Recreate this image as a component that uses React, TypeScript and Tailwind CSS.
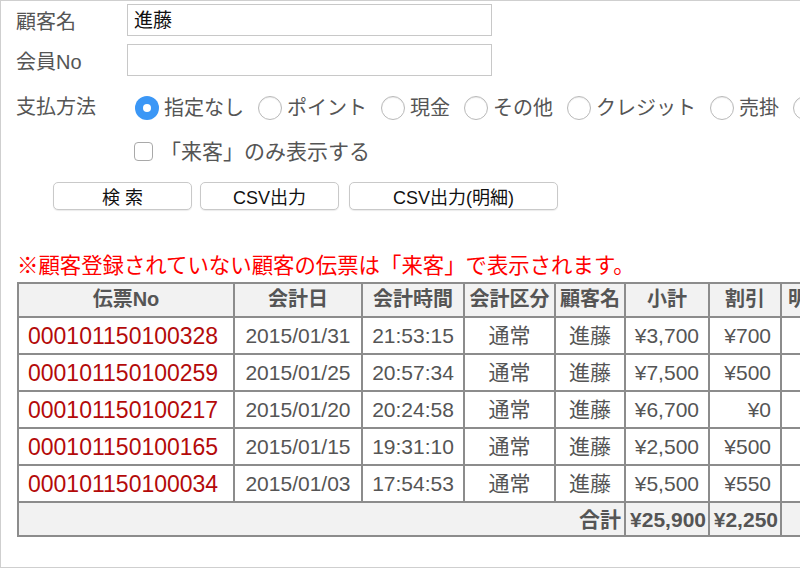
import React from "react";

const FONT = { fontFamily: '"Liberation Sans", "Noto Sans CJK JP", sans-serif' };

const PAYMENTS = ["指定なし", "ポイント", "現金", "その他", "クレジット", "売掛", "電子マネー"];

const ROWS = [
  { no: "000101150100328", date: "2015/01/31", time: "21:53:15", sub: "¥3,700", disc: "¥700" },
  { no: "000101150100259", date: "2015/01/25", time: "20:57:34", sub: "¥7,500", disc: "¥500" },
  { no: "000101150100217", date: "2015/01/20", time: "20:24:58", sub: "¥6,700", disc: "¥0" },
  { no: "000101150100165", date: "2015/01/15", time: "19:31:10", sub: "¥2,500", disc: "¥500" },
  { no: "000101150100034", date: "2015/01/03", time: "17:54:53", sub: "¥5,500", disc: "¥550" },
];

function Radio({ label, checked }: { label: string; checked?: boolean }) {
  return (
    <span className="flex shrink-0 items-center">
      {checked ? (
        <span className="flex h-[24px] w-[24px] items-center justify-center rounded-full bg-[#3b97f6]">
          <span className="h-[8px] w-[8px] rounded-full bg-white" />
        </span>
      ) : (
        <span className="h-[24px] w-[24px] rounded-full border border-[#b9b9b9] bg-white shadow-[inset_0_1px_1px_rgba(0,0,0,0.08)]" />
      )}
      <span className="ml-[5px] whitespace-nowrap text-[20px] leading-none text-[#555]">{label}</span>
    </span>
  );
}

function Btn({ label, w }: { label: string; w: string }) {
  return (
    <button className={`${w} flex h-[28px] items-center justify-center rounded-[5px] border border-[#c9c9c9] bg-white pt-[3px] text-[18px] leading-none text-[#111] shadow-[0_1px_1px_rgba(0,0,0,0.08)]`}>
      {label}
    </button>
  );
}

const th = "border-2 border-[#8c8c8c] bg-[#f2f2f2] p-0 pb-[2px] text-center text-[20px] font-bold text-[#555]";
const td = "border-2 border-[#8c8c8c] p-0 text-[21px] text-[#555]";

export default function App() {
  return (
    <div style={FONT} className="h-[568px] w-full overflow-hidden border-t border-b border-l border-[#cfcfcf] bg-white">
      <div className="pl-[15px] pt-[3px]">
        {/* 顧客名 */}
        <div className="flex h-[32px] items-center">
          <span className="mt-[4px] w-[111px] text-[20px] leading-none text-[#555]">顧客名</span>
          <div className="flex h-[32px] w-[365px] items-center border border-[#c8c8c8] px-[6px] text-[19px] leading-none text-[#111]">進藤</div>
        </div>
        {/* 会員No */}
        <div className="mt-[8px] flex h-[32px] items-center">
          <span className="mt-[4px] w-[111px] text-[20px] leading-none text-[#555]">会員No</span>
          <div className="h-[32px] w-[365px] border border-[#c8c8c8]" />
        </div>
        {/* 支払方法 */}
        <div className="mt-[17px] flex h-[30px] items-center">
          <span className="-mt-[2px] w-[119px] shrink-0 text-[20px] leading-none text-[#555]">支払方法</span>
          <div className="flex items-center gap-[14px]">
            {PAYMENTS.map((p, i) => (
              <Radio key={p} label={p} checked={i === 0} />
            ))}
          </div>
        </div>
        {/* 来客のみ */}
        <div className="mt-[15px] flex h-[26px] items-center pl-[118px]">
          <span className="h-[19px] w-[19px] rounded-[4px] border border-[#a9a9a9] bg-white" />
          <span className="ml-[7px] text-[21px] leading-none text-[#555]">「来客」のみ表示する</span>
        </div>
        {/* buttons */}
        <div className="mt-[18px] flex items-center pl-[37px]">
          <Btn label="検 索" w="w-[139px]" />
          <div className="ml-[8px]"><Btn label="CSV出力" w="w-[139px]" /></div>
          <div className="ml-[10px]"><Btn label="CSV出力(明細)" w="w-[209px]" /></div>
        </div>
        {/* note */}
        <p className="mt-[46px] pl-[1px] text-[21.4px] leading-none whitespace-nowrap text-[#f00]">
          ※顧客登録されていない顧客の伝票は「来客」で表示されます。
        </p>
        {/* table */}
        <table className="mt-[5px] ml-[1px] w-[850px] table-fixed border-collapse border-2 border-[#8c8c8c]">
          <colgroup>
            <col className="w-[216px]" />
            <col className="w-[128px]" />
            <col className="w-[102px]" />
            <col className="w-[91px]" />
            <col className="w-[70px]" />
            <col className="w-[84px]" />
            <col className="w-[72px]" />
            <col className="w-[87px]" />
          </colgroup>
          <thead>
            <tr className="h-[32px]">
              <th className={th}>伝票No</th>
              <th className={th}>会計日</th>
              <th className={th}>会計時間</th>
              <th className={`${th} whitespace-nowrap`}>会計区分</th>
              <th className={th}>顧客名</th>
              <th className={th}>小計</th>
              <th className={th}>割引</th>
              <th className={`${th} text-left pl-[6px]`}>明細</th>
            </tr>
          </thead>
          <tbody>
            {ROWS.map((r) => (
              <tr key={r.no} className="h-[37px]">
                <td className={`${td} pl-[9px] text-[23px] text-[#b40a0a]`}>{r.no}</td>
                <td className={`${td} text-center`}>{r.date}</td>
                <td className={`${td} text-center`}>{r.time}</td>
                <td className={`${td} text-center`}>通常</td>
                <td className={`${td} text-center`}>進藤</td>
                <td className={`${td} pr-[9px] text-right`}>{r.sub}</td>
                <td className={`${td} pr-[9px] text-right`}>{r.disc}</td>
                <td className={td} />
              </tr>
            ))}
            <tr className="h-[34px] bg-[#f2f2f2]">
              <td colSpan={5} className={`${td} pr-[3px] text-right font-bold`}>合計</td>
              <td className={`${td} pr-[2px] text-right font-bold`}>¥25,900</td>
              <td className={`${td} pr-[2px] text-right font-bold`}>¥2,250</td>
              <td className={td} />
            </tr>
          </tbody>
        </table>
      </div>
    </div>
  );
}
